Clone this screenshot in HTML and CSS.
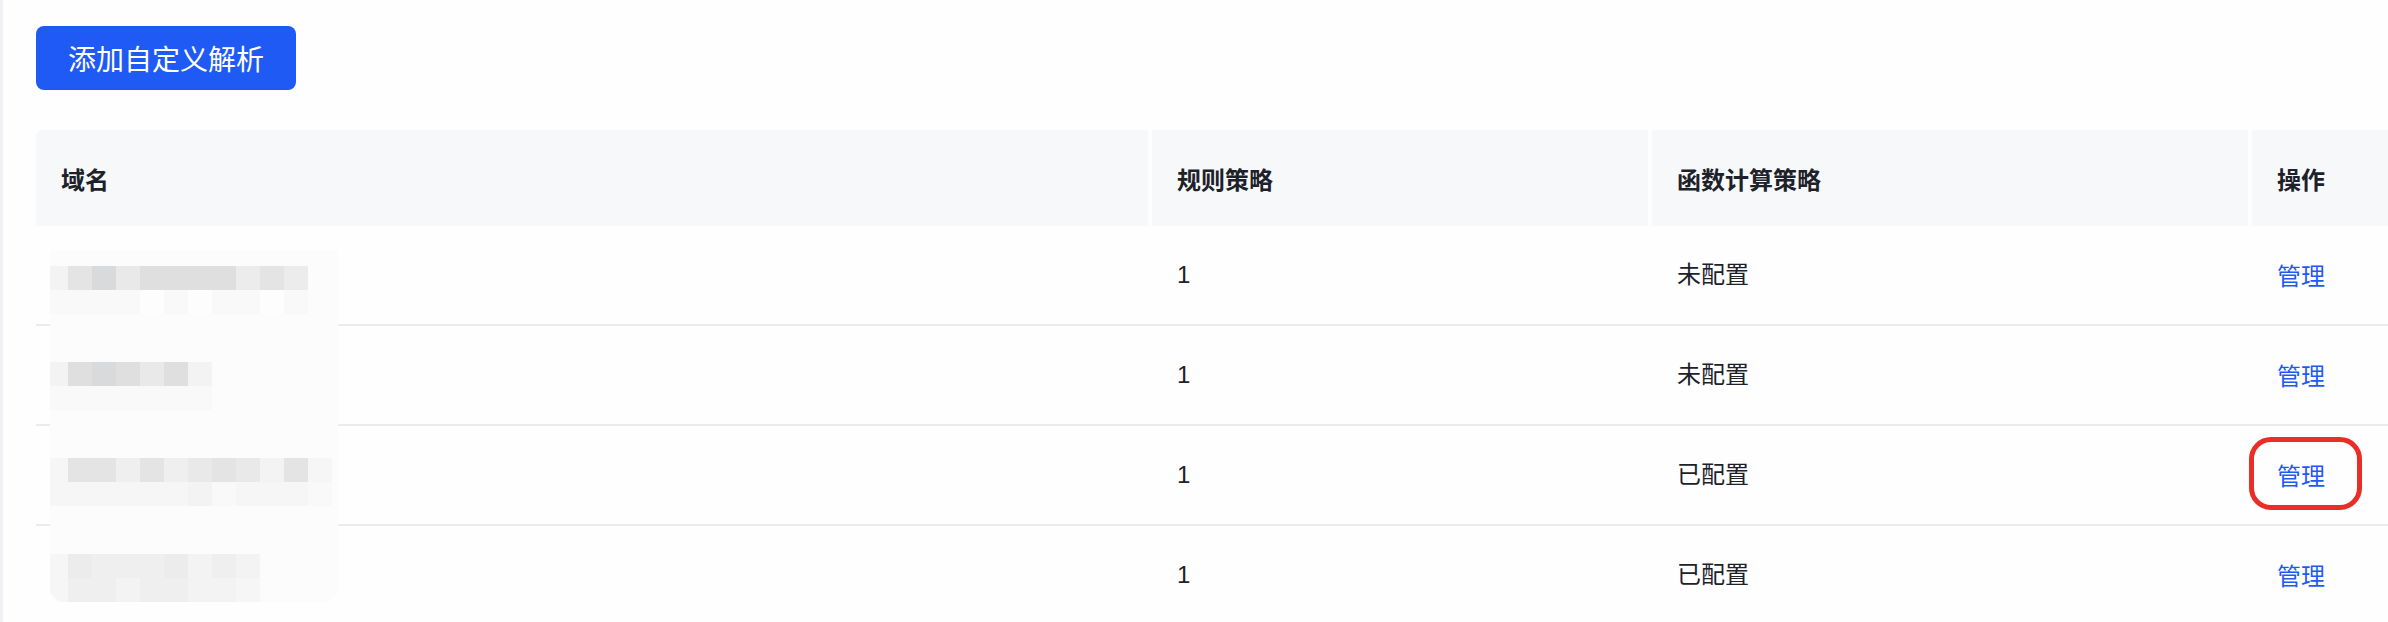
FILE: index.html
```html
<!DOCTYPE html>
<html lang="zh-CN">
<head>
<meta charset="utf-8">
<title>自定义解析</title>
<link rel="stylesheet" href="styles.css">
</head>
<body>
<div class="page">
  <div class="toolbar">
    <button class="btn-primary" type="button">添加自定义解析</button>
  </div>
  <div class="table">
    <div class="thead">
      <div class="th th-first">域名</div>
      <div class="th">规则策略</div>
      <div class="th">函数计算策略</div>
      <div class="th">操作</div>
    </div>
    <div class="tbody">
      <div class="tr">
        <div class="td"></div>
        <div class="td">1</div>
        <div class="td">未配置</div>
        <div class="td"><a class="op-link">管理</a></div>
      </div>
      <div class="tr">
        <div class="td"></div>
        <div class="td">1</div>
        <div class="td">未配置</div>
        <div class="td"><a class="op-link">管理</a></div>
      </div>
      <div class="tr">
        <div class="td"></div>
        <div class="td">1</div>
        <div class="td">已配置</div>
        <div class="td"><a class="op-link marked">管理</a></div>
      </div>
      <div class="tr">
        <div class="td"></div>
        <div class="td">1</div>
        <div class="td">已配置</div>
        <div class="td"><a class="op-link">管理</a></div>
      </div>

      <div class="redact">
        <div class="mosaic">
          <div class="strip">
            <i class="k7 first"></i><i class="k3"></i><i class="k1"></i><i class="k4"></i><i class="k2"></i><i class="k2"></i><i class="k2"></i><i class="k2"></i><i class="k5"></i><i class="k3"></i><i class="k5"></i>
          </div>
          <div class="strip">
            <i class="k9 first"></i><i class="k9"></i><i class="k9"></i><i class="k9"></i><i class="kw"></i><i class="k9"></i><i class="kw"></i><i class="k9"></i><i class="k9"></i><i class="kw"></i><i class="k9"></i>
          </div>
        </div>
        <div class="mosaic">
          <div class="strip">
            <i class="k7 first"></i><i class="k2"></i><i class="k1"></i><i class="k2"></i><i class="k4"></i><i class="k2"></i><i class="k7"></i>
          </div>
          <div class="strip">
            <i class="k9 first"></i><i class="k9"></i><i class="k9"></i><i class="k9"></i><i class="k9"></i><i class="k9"></i><i class="k9"></i>
          </div>
        </div>
        <div class="mosaic">
          <div class="strip">
            <i class="k8 first"></i><i class="k3"></i><i class="k3"></i><i class="k6"></i><i class="k3"></i><i class="k6"></i><i class="k4"></i><i class="k3"></i><i class="k4"></i><i class="k7"></i><i class="k3"></i><i class="k8"></i>
          </div>
          <div class="strip">
            <i class="k8 first"></i><i class="k8"></i><i class="k8"></i><i class="k8"></i><i class="k8"></i><i class="k8"></i><i class="k7"></i><i class="k9"></i><i class="k8"></i><i class="k8"></i><i class="k8"></i><i class="k9"></i>
          </div>
        </div>
        <div class="mosaic">
          <div class="strip">
            <i class="k8 first"></i><i class="k5"></i><i class="k6"></i><i class="k6"></i><i class="k6"></i><i class="k5"></i><i class="k7"></i><i class="k6"></i><i class="k7"></i>
          </div>
          <div class="strip">
            <i class="k8 first round"></i><i class="k6"></i><i class="k6"></i><i class="k7"></i><i class="k6"></i><i class="k6"></i><i class="k7"></i><i class="k7"></i><i class="k8"></i>
          </div>
        </div>
      </div>
    </div>
  </div>
</div>
</body>
</html>
```

FILE: styles.css
```css
* {
  box-sizing: border-box;
}

html, body {
  margin: 0;
  padding: 0;
  background: #fefefe;
}

body {
  font-family: "Liberation Sans", "Noto Sans CJK SC", sans-serif;
  color: #1d2129;
  overflow: hidden;
}

.page {
  min-height: 622px;
  border-left: 3px solid #f0f1f4;
  padding: 26px 0 0 33px;
}

.toolbar {
  display: flex;
  margin-bottom: 40px;
}

.btn-primary {
  height: 64px;
  padding: 0 32px;
  border: none;
  border-radius: 8px;
  background: #1f5af5;
  color: #ffffff;
  font-family: "Noto Sans CJK SC", sans-serif;
  font-size: 28px;
  line-height: 64px;
  letter-spacing: 0;
}

.table {
  width: 100%;
}

.thead,
.tr {
  display: grid;
  grid-template-columns: 1112px 496px 596px 1fr;
  column-gap: 4px;
}

.thead {
  height: 96px;
}

.th {
  background: #f7f8fa;
  display: flex;
  align-items: center;
  padding-left: 25px;
  font-family: "Noto Sans CJK SC", sans-serif;
  font-size: 24px;
  font-weight: 700;
  color: #1d2129;
}

.th-first {
  border-top-left-radius: 6px;
}

.tbody {
  position: relative;
}

.tr {
  height: 100px;
  border-bottom: 2px solid #ebebeb;
}

.td {
  display: flex;
  align-items: center;
  padding-left: 25px;
  font-size: 24px;
  color: #1d2129;
  line-height: 34px;
}

.op-link {
  color: #1f5af5;
  font-family: "Noto Sans CJK SC", sans-serif;
  font-size: 24px;
  line-height: 34px;
  cursor: pointer;
}

.marked {
  position: relative;
}

.marked::after {
  content: "";
  position: absolute;
  left: -28px;
  right: -37px;
  top: -21px;
  bottom: -18px;
  border: 5px solid #e92e28;
  border-radius: 22px;
}

/* redaction patch over the domain column */
.redact {
  position: absolute;
  left: 14px;
  top: 24px;
  width: 288px;
  height: 352px;
  background: #fcfcfc;
  border-radius: 0 0 16px 16px;
  padding-top: 16px;
  display: flex;
  flex-direction: column;
  gap: 48px;
}

.mosaic {
  display: flex;
  flex-direction: column;
}

.strip {
  display: flex;
  height: 24px;
}

.strip i {
  display: block;
  width: 24px;
  height: 24px;
}

.strip i.first {
  width: 18px;
}

.strip i.round {
  border-bottom-left-radius: 14px;
}

.k1 { background: #d9dadb; }
.k2 { background: #dfdfdf; }
.k3 { background: #e4e4e4; }
.k4 { background: #e9e9e9; }
.k5 { background: #ececec; }
.k6 { background: #efefef; }
.k7 { background: #f3f3f3; }
.k8 { background: #f6f6f6; }
.k9 { background: #f9f9f9; }
.kw { background: #fdfdfd; }
```
